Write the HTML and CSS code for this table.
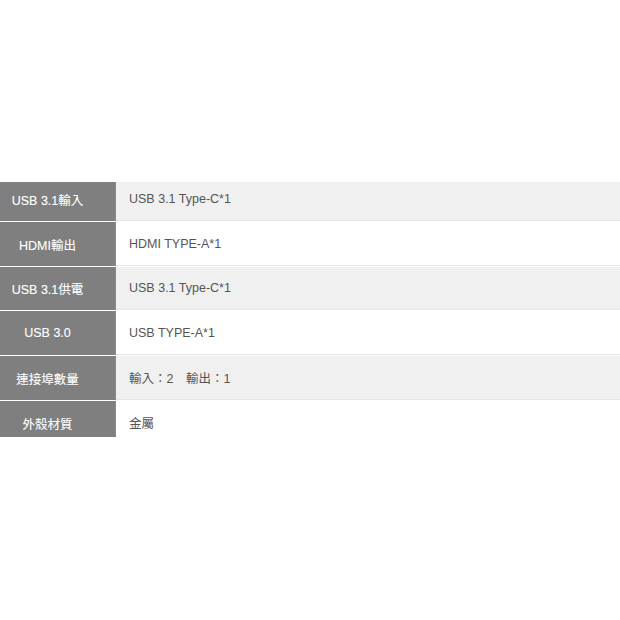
FILE: index.html
```html
<!DOCTYPE html>
<html lang="zh-Hant">
<head>
<meta charset="utf-8">
<title>規格</title>
<link rel="stylesheet" href="styles.css">
</head>
<body>
<div class="page">
  <div class="frame">
    <div class="spec">
      <div class="row r1 alt"><div class="key">USB 3.1輸入</div><div class="val">USB 3.1 Type-C*1</div></div>
      <div class="row r2"><div class="key">HDMI輸出</div><div class="val">HDMI TYPE-A*1</div></div>
      <div class="row r3 alt"><div class="key">USB 3.1供電</div><div class="val">USB 3.1 Type-C*1</div></div>
      <div class="row r4"><div class="key">USB 3.0</div><div class="val">USB TYPE-A*1</div></div>
      <div class="row r5 alt"><div class="key">連接埠數量</div><div class="val">輸入：2　輸出：1</div></div>
      <div class="row r6"><div class="key">外殼材質</div><div class="val">金屬</div></div>
    </div>
  </div>
</div>
</body>
</html>
```
FILE: styles.css
```css
html, body {
  margin: 0;
  padding: 0;
  background: #ffffff;
}
.page {
  width: 620px;
  height: 620px;
  padding-top: 182px;
  box-sizing: border-box;
  font-family: "Liberation Sans", Arial, "Noto Sans CJK TC", sans-serif;
  font-size: 12.5px;
}
.frame {
  height: 255px;
  overflow: hidden;
}
.spec {
  display: flex;
  flex-direction: column;
  margin-top: -5px;
}
.row {
  display: grid;
  grid-template-columns: 116px 1fr;
  height: 45px;
  border-bottom: 1px solid #ffffff;
  box-sizing: border-box;
}
.r3 { height: 44px; }
.row .val {
  border-bottom: 1px solid #e6e6e6;
}
.key {
  background: #7f7f7f;
  color: #ffffff;
  display: flex;
  align-items: center;
  justify-content: center;
  padding-right: 20px;
  border-right: 1px solid #8a8a8a;
  -webkit-text-stroke: 0.1px #ffffff;
}
.val {
  display: flex;
  align-items: center;
  padding-left: 13px;
  color: #555555;
  background: #ffffff;
}
.alt .val {
  background: #f0f0f0;
}
```
